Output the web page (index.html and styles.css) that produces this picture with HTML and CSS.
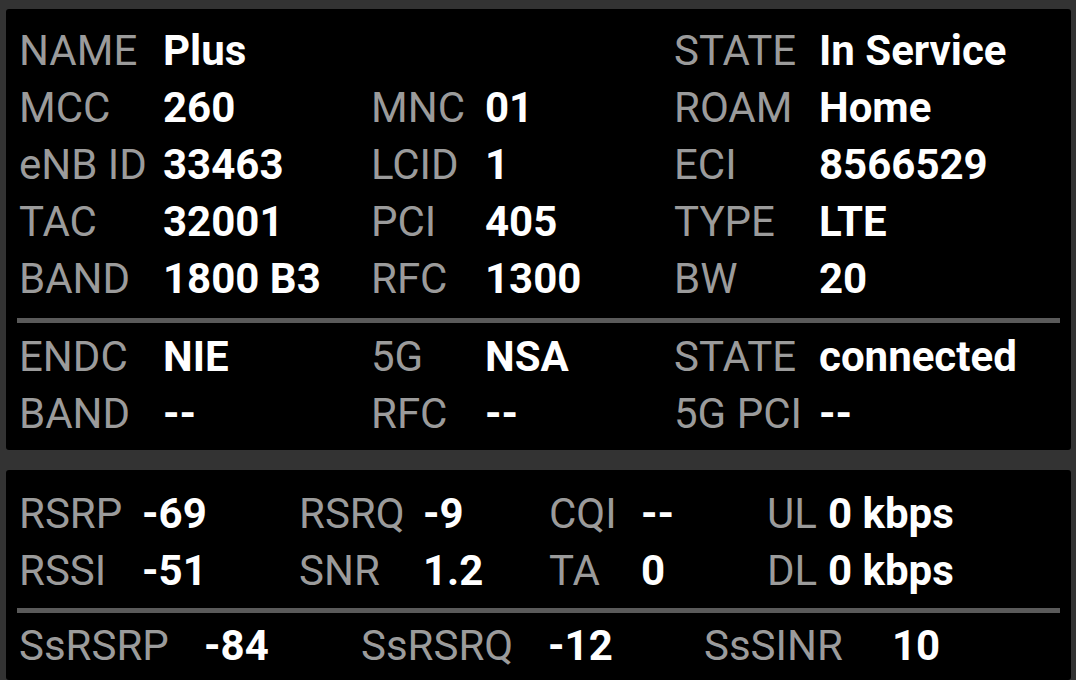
FILE: index.html
```html
<!DOCTYPE html>
<html lang="en">
  <head>
    <meta charset="UTF-8" />
    <meta name="viewport" content="width=device-width, initial-scale=1.0" />
    <title>Cell Info</title>
    <link rel="stylesheet" href="styles.css">
  </head>
  <body>
    <div class="screen">
      <div class="card cell-card">
        <div class="grid lte-grid">
          <span class="label">NAME</span><span class="value">Plus</span>
          <span></span><span></span>
          <span class="label">STATE</span><span class="value">In Service</span>

          <span class="label">MCC</span><span class="value">260</span>
          <span class="label">MNC</span><span class="value">01</span>
          <span class="label">ROAM</span><span class="value">Home</span>

          <span class="label">eNB ID</span><span class="value">33463</span>
          <span class="label">LCID</span><span class="value">1</span>
          <span class="label">ECI</span><span class="value">8566529</span>

          <span class="label">TAC</span><span class="value">32001</span>
          <span class="label">PCI</span><span class="value">405</span>
          <span class="label">TYPE</span><span class="value">LTE</span>

          <span class="label">BAND</span><span class="value">1800 B3</span>
          <span class="label">RFC</span><span class="value">1300</span>
          <span class="label">BW</span><span class="value">20</span>
        </div>

        <div class="divider cell-divider"></div>

        <div class="grid lte-grid nr-grid">
          <span class="label">ENDC</span><span class="value">NIE</span>
          <span class="label">5G</span><span class="value">NSA</span>
          <span class="label">STATE</span><span class="value">connected</span>

          <span class="label">BAND</span><span class="value">--</span>
          <span class="label">RFC</span><span class="value">--</span>
          <span class="label">5G PCI</span><span class="value">--</span>
        </div>
      </div>

      <div class="card signal-card">
        <div class="grid signal-grid">
          <span class="label">RSRP</span><span class="value">-69</span>
          <span class="label">RSRQ</span><span class="value">-9</span>
          <span class="label">CQI</span><span class="value">--</span>
          <span class="label">UL</span><span class="value">0 kbps</span>

          <span class="label">RSSI</span><span class="value">-51</span>
          <span class="label">SNR</span><span class="value">1.2</span>
          <span class="label">TA</span><span class="value">0</span>
          <span class="label">DL</span><span class="value">0 kbps</span>
        </div>

        <div class="divider signal-divider"></div>

        <div class="grid ss-grid">
          <span class="label">SsRSRP</span><span class="value">-84</span>
          <span class="label">SsRSRQ</span><span class="value">-12</span>
          <span class="label">SsSINR</span><span class="value">10</span>
        </div>
      </div>
    </div>
  </body>
</html>
```

FILE: styles.css
```css
body {
  margin: 0;
  background-color: #fff;
  font-family: Roboto, "Noto Sans", sans-serif;
  font-size: 42px;
  user-select: none;
}
.screen {
  height: 680px;
  background-color: #333;
  padding: 9px 5px 0 6px;
  box-sizing: border-box;
  display: flex;
  flex-direction: column;
  gap: 20px;
}
.card {
  background-color: #000;
  border-radius: 3px;
  padding: 0 11px;
  box-sizing: border-box;
}
.cell-card {
  height: 441px;
  padding-top: 13px;
}
.signal-card {
  flex: 1;
  padding-top: 15px;
}
.grid {
  display: grid;
  grid-auto-rows: 57px;
  line-height: 57px;
  padding-left: 2px;
  white-space: nowrap;
}
.lte-grid {
  grid-template-columns: 144px 208px 114px 189px 145px 1fr;
}
.signal-grid {
  grid-template-columns: 123px 157px 124px 126px 92px 126px 61px 1fr;
}
.ss-grid {
  grid-template-columns: 185px 157px 187px 156px 188px 1fr;
}
.label {
  color: #9b9b9b;
  font-weight: 400;
}
.value {
  color: #fff;
  font-weight: 700;
}
.divider {
  height: 5px;
  background-color: #5a5a5a;
}
.cell-divider {
  margin: 11px 0 5px;
}
.signal-divider {
  margin: 9px 0 4px;
}
```
